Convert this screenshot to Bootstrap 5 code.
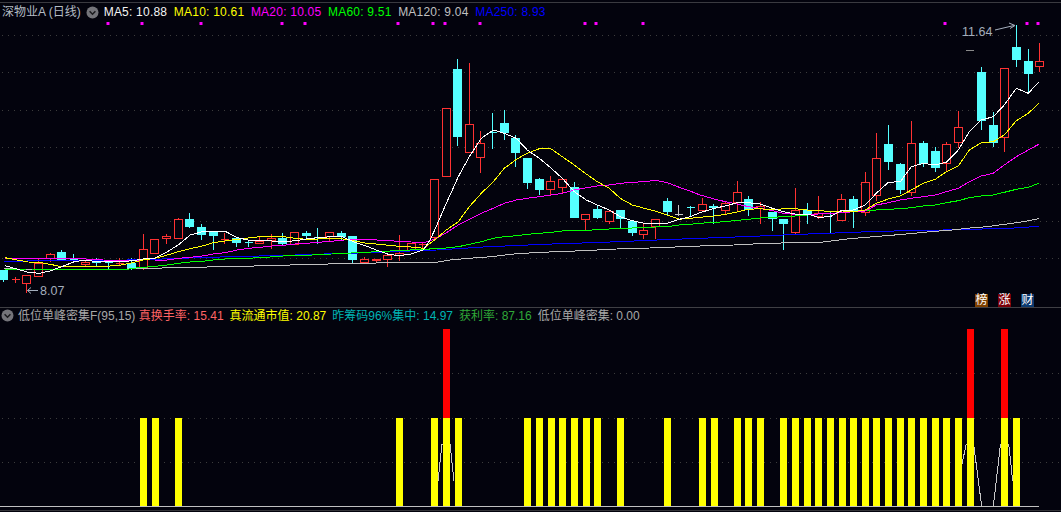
<!DOCTYPE html>
<html lang="zh">
<head>
<meta charset="utf-8">
<title>深物业A 日线</title>
<link href="https://cdn.jsdelivr.net/npm/bootstrap@5.3.0/dist/css/bootstrap.min.css" rel="stylesheet">
<style>
html,body{height:100%;margin:0;overflow:hidden;background:#03030d;}
body{font-family:"Liberation Sans","Noto Sans CJK SC",sans-serif;font-size:12px;line-height:16px;color:#b4bcc4;}
.term{width:1061px;height:512px;}
.pane-main{height:305px;border-top:1px solid #3a3a40;margin-top:2px;}
.pane-sub{height:205px;border-top:1px solid #3f3f44;}
.legend{height:19px;padding-left:2px;padding-bottom:1px;white-space:nowrap;flex:none;}
.legend-sub{height:19px;padding-left:1px;padding-bottom:4px;}
.legend span{display:block;}
.legend .itm{margin-right:6.6px;letter-spacing:.22px;}
.legend-sub .itm{margin-right:6px;letter-spacing:0;}
.legend-sub .itm-first{margin-right:3.5px;}
.chev{width:13px;height:13px;flex:none;}
.chev-main{margin-left:5px;margin-right:5px;}
.chart{display:block;width:1061px;flex:1 1 auto;min-height:0;}
.c-name{color:#b4bcc4;}.c-white{color:#f4f4f4;}.c-yel{color:#ffff00;}.c-mag{color:#ff00ff;}.c-grn{color:#00ff00;}.c-gry{color:#c0c0c0;}.c-blu{color:#0000ff;}
.c-sal{color:#ff6464;}.c-tea{color:#00b4b4;}.c-lgn{color:#30a838;}.c-sub{color:#a8a8a8;}
.tags{right:27px;bottom:0;gap:10px;}
.tagbox{width:13px;height:13px;font-size:12px;line-height:13px;text-align:center;color:#fff;}
.tag-a{background:#7d3f00;}.tag-b{background:#7a0008;}.tag-c{background:#0c3a70;}
.chart text{font-family:"Liberation Sans",sans-serif;font-size:12.5px;fill:#a4aebc;}
</style>
</head>
<body>
<main class="term d-flex flex-column">
  <section class="pane-main position-relative d-flex flex-column">
    <div class="legend d-flex align-items-center">
      <span class="c-name">深物业A (日线)</span>
      <svg class="chev chev-main" viewBox="0 0 13 13"><circle cx="6.5" cy="6.5" r="6" fill="#74747a"/><path d="M3.6 5.2 6.5 8.2 9.4 5.2" fill="none" stroke="#1a1a1e" stroke-width="1.5"/></svg>
      <span class="itm c-white">MA5: 10.88</span>
      <span class="itm c-yel">MA10: 10.61</span>
      <span class="itm c-mag">MA20: 10.05</span>
      <span class="itm c-grn">MA60: 9.51</span>
      <span class="itm c-gry">MA120: 9.04</span>
      <span class="itm c-blu">MA250: 8.93</span>
    </div>
    <svg id="mainChart" class="chart" viewBox="0 22 1061 285" preserveAspectRatio="none"></svg>
    <div class="tags position-absolute d-flex">
      <span class="tagbox tag-a">榜</span>
      <span class="tagbox tag-b">涨</span>
      <span class="tagbox tag-c">财</span>
    </div>
  </section>
  <section class="pane-sub d-flex flex-column">
    <div class="legend legend-sub d-flex align-items-center">
      <svg class="chev me-1" viewBox="0 0 13 13"><circle cx="6.5" cy="6.5" r="6" fill="#74747a"/><path d="M3.6 5.2 6.5 8.2 9.4 5.2" fill="none" stroke="#1a1a1e" stroke-width="1.5"/></svg>
      <span class="itm itm-first c-sub">低位单峰密集F(95,15)</span>
      <span class="itm c-sal">真换手率: 15.41</span>
      <span class="itm c-yel">真流通市值: 20.87</span>
      <span class="itm c-tea">昨筹码96%集中: 14.97</span>
      <span class="itm c-lgn">获利率: 87.16</span>
      <span class="itm c-sub">低位单峰密集: 0.00</span>
    </div>
    <svg id="subChart" class="chart" viewBox="0 327 1061 185" preserveAspectRatio="none"></svg>
  </section>
</main>
<script src="https://cdn.jsdelivr.net/npm/bootstrap@5.3.0/dist/js/bootstrap.bundle.min.js"></script>
<script>
var NS='http://www.w3.org/2000/svg';
function el(p,n,a,t){var e=document.createElementNS(NS,n);for(var k in a)e.setAttribute(k,a[k]);if(t)e.textContent=t;p.appendChild(e);return e;}
var M=document.getElementById('mainChart'),S=document.getElementById('subChart');
var DOT={stroke:'#3c3c3c','stroke-width':1,'stroke-dasharray':'1 5'};
[35.5,72.5,110.5,147.5,184.5,221.5,258.5].forEach(function(y){el(M,'line',Object.assign({x1:2,x2:1061,y1:y,y2:y},DOT));});
[373.5,418.5,462.5].forEach(function(y){el(S,'line',Object.assign({x1:2,x2:1061,y1:y,y2:y},DOT));});

/* zoomed readings: [offsetX, offsetY, x,y,x,y...] in 3x crop units */
function pts(o){var r=[];for(var s=0;s<o.length;s++){var g=o[s];for(var i=2;i<g.length;i+=2)r.push((g[0]+g[i]/3).toFixed(1)+','+(g[1]+g[i+1]/3).toFixed(1));}return r.join(' ');}
var L={
 blue:[[0,170,12,274,240,271,380,270,520,266,590,263,730,259,830,257,940,253,1050,250],[350,100,260,450,400,441,580,433,760,427,900,421,1050,415],[700,130,130,320,300,313,540,304,730,300,930,295,1016,289]],
 gray:[[0,170,12,296,80,298,380,297,520,293,620,292,625,289,762,288,905,284,970,284,1000,280,1050,280],[350,100,260,487,300,480,355,475,425,470,480,463,550,458,620,455,700,452,800,447,900,444,1000,440,1050,438],[700,130,60,347,160,342,270,338,370,336,440,327,520,320,610,313,690,305,756,300,800,295,860,290,920,282,970,275,1016,266]],
 green:[[0,170,15,298,80,297,380,298,415,293,466,289,502,285,535,280,571,276,607,274,640,270,676,267,712,265,760,264,800,262,850,258,936,255],[350,100,280,445,325,440,358,433,394,425,430,415,463,410,499,407,532,403,568,400,604,397,637,393,709,391,778,387,847,384,916,381,952,380,988,375,1020,373,1050,370],[700,130,43,277,76,275,112,271,145,268,181,264,217,262,250,260,286,258,322,255,355,252,427,248,496,242,529,240,565,238,601,236,634,233,670,228,706,225,739,218,775,212,808,203,844,198,880,195,913,187,949,178,985,172,1016,160]],
 mag:[[0,170,15,265,50,265,85,266,118,266,150,265,185,265,240,266,310,270,362,272,430,273,466,273,502,270,535,265,571,262,607,258,640,252,676,248,712,240,745,235,781,232,815,228,850,226,886,222,919,220,955,217,991,214,1024,211],[350,100,0,418,46,418,115,422,184,426,220,428,254,418,289,398,325,375,358,358,394,340,430,325,463,310,499,300,532,295,568,290,604,285,637,280,673,270,709,263,742,258,778,255,811,250,847,247,883,245,916,241,952,248,988,262,1020,273,1050,285],[700,130,0,195,43,207,76,215,112,222,145,230,181,235,217,242,250,250,286,253,322,253,355,252,391,250,427,248,460,245,496,243,529,225,565,218,601,210,634,205,670,200,706,195,739,185,775,175,808,155,844,138,880,130,913,105,949,80,985,60,1016,43]],
 yel:[[0,170,15,263,50,270,85,276,118,277,150,283,185,290,223,290,256,290,290,290,330,288,362,285,397,278,430,270,466,265,502,255,535,245,571,236,607,228,640,218,676,213,712,208,745,204,781,200,815,200,850,200,886,205,919,208,955,207,991,206,1024,206],[350,100,10,422,46,429,79,432,115,436,148,439,184,441,220,445,254,420,289,390,325,365,358,320,394,280,430,245,463,205,499,178,532,160,568,146,604,147,637,170,673,195,709,222,742,245,778,265,811,295,847,315,883,325,916,333,952,345,988,358,1020,355,1050,352],[700,130,43,258,76,253,112,246,145,238,181,236,217,240,250,236,286,236,322,240,355,242,391,244,427,243,460,245,496,240,529,220,565,207,601,198,634,180,670,160,706,148,739,125,775,108,808,60,844,38,880,35],[700,0,913,405,949,362,985,340,1016,310]],
 white:[[0,170,15,287,50,297,85,307,118,310,150,303,185,290,223,275,256,270,290,275,330,275,362,275,397,272,430,267,466,264,502,245,535,225,571,195,607,185,640,184,676,184,712,203,745,210,781,212,815,213,850,215,886,212,919,207,955,203,991,200,1024,199],[350,100,10,425,46,437,79,450,115,463,148,467,184,462,220,450,240,420,254,390,289,310,325,230,358,170,394,115,430,90,463,100,499,115,532,150,568,175,604,205,637,235,673,275,709,300,742,315,778,330,811,350,847,362,883,370,916,372,952,370,988,358,1020,350,1050,338],[700,130,43,235,76,228,112,218,145,218,181,222,217,235,250,245,286,252,322,252,355,262,391,260,427,240,460,240,496,225,529,190,565,157,601,155,634,110,670,100,706,105,739,97,775,60],[700,0,808,395,844,360,880,350,913,315,949,265,985,280,1016,246]]
};
/* candles: index, type(c/r/w), wickTop, bodyTop, bodyBottom, wickBottom */
var C=[[0,'c',270,270,280,282],[1,'r',277,279,280,283],[2,'r',275,275,284,293],[3,'r',259,263,277,277],[4,'r',253,254,259,262],[5,'c',250,252,261,261],[6,'c',254,259,260,262],[7,'r',260,262,265,266],[8,'c',258,261,263,267],[9,'c',260,262,263,269],[10,'r',258,263,264,265],[11,'c',258,263,268,270],[12,'r',234,249,268,270],[13,'r',239,239,254,254],[14,'r',234,236,239,244],[15,'r',218,219,239,239],[16,'c',213,219,227,228],[17,'c',224,227,235,240],[18,'c',231,231,236,250],[19,'r',233,239,240,244],[20,'c',237,238,243,247],[21,'c',241,242,243,247],[22,'r',236,241,244,244],[23,'r',234,238,241,249],[24,'c',233,238,244,246],[25,'r',232,232,245,245],[26,'c',231,233,236,239],[27,'c',228,237,238,244],[28,'r',232,232,237,241],[29,'c',231,233,237,240],[30,'c',236,236,260,263],[31,'r',257,259,263,263],[32,'r',259,259,261,263],[33,'r',255,255,260,267],[34,'r',235,253,256,261],[35,'r',243,243,251,251],[36,'r',242,244,245,248],[37,'r',179,179,238,240],[38,'r',108,108,177,177],[39,'c',59,69,137,146],[40,'r',63,124,153,153],[41,'r',131,143,158,173],[42,'c',113,132,133,149],[43,'c',110,123,133,140],[44,'c',135,138,153,167],[45,'c',158,158,183,189],[46,'c',178,179,190,195],[47,'r',176,181,190,195],[48,'r',179,179,188,193],[49,'c',182,187,218,218],[50,'r',214,214,220,230],[51,'c',205,209,218,219],[52,'r',211,211,222,224],[53,'c',210,210,219,228],[54,'c',220,221,233,236],[55,'r',223,230,235,239],[56,'r',219,219,227,239],[57,'c',198,201,212,216],[58,'w',205,214,215,216],[59,'c',206,207,208,217],[60,'r',198,204,211,211],[61,'c',204,206,208,224],[62,'r',201,203,211,215],[63,'r',181,192,203,212],[64,'c',196,199,210,216],[65,'r',202,206,209,224],[66,'c',212,212,219,231],[67,'c',219,219,224,250],[68,'r',188,210,233,234],[69,'c',203,210,214,224],[70,'r',196,213,217,219],[71,'c',211,211,212,233],[72,'r',194,199,221,221],[73,'c',196,199,212,228],[74,'r',172,182,213,216],[75,'r',133,158,196,201],[76,'c',125,144,162,170],[77,'c',163,164,190,194],[78,'r',121,143,193,196],[79,'c',141,143,164,167],[80,'c',147,151,168,172],[81,'r',142,144,164,172],[82,'r',111,127,143,148],[84,'c',67,72,121,130],[85,'c',112,125,143,147],[86,'r',68,68,138,152],[87,'c',25,47,60,67],[88,'c',49,61,74,93],[89,'r',43,61,67,72]];
var cc={c:'#55ffff',r:'#ff3232',w:'#c8c8c8'};
C.forEach(function(k){
 var x=Math.round(3+k[0]*11.645)+.5,col=cc[k[1]],g=el(M,'g',{stroke:col,fill:'none','stroke-width':1,'shape-rendering':'crispEdges'});
 el(g,'line',{x1:x,x2:x,y1:k[2],y2:k[3]});el(g,'line',{x1:x,x2:x,y1:k[4],y2:k[5]});
 if(k[4]-k[3]<=1){el(g,'line',{x1:x-4,x2:x+4,y1:k[3]+.5,y2:k[3]+.5,'stroke-width':1});el(g,'line',{x1:x,x2:x,y1:k[3],y2:k[4]});}
 else if(k[1]=='c'){el(g,'rect',{x:x-4.5,y:k[3],width:9,height:k[4]-k[3],fill:col,stroke:'none'});}
 else{el(g,'rect',{x:x-4,y:k[3]+.5,width:8,height:k[4]-k[3]-1,'stroke-width':1,fill:'#03030d'});}
});
[['blue','#0000ff'],['gray','#c0c0c0'],['green','#00ff00'],['mag','#ff00ff'],['yel','#ffff00'],['white','#ffffff']].forEach(function(a){
 el(M,'polyline',{points:pts(L[a[0]]),fill:'none',stroke:a[1],'stroke-width':1,'shape-rendering':'crispEdges'});
});
[108,142,201,282,305,398,433,445,480,585,596,643,945,1027,1038].forEach(function(x){el(M,'rect',{x:x-1.5,y:22,width:3,height:3,fill:'#ff00ff'});});
el(M,'text',{x:962,y:36},'11.64');
el(M,'path',{d:'M995 30 L1014 25.5 M1009 23 L1015 25.5 L1010 28.5',fill:'none',stroke:'#a4aebc','stroke-width':1});
el(M,'line',{x1:966,x2:974,y1:50.5,y2:50.5,stroke:'#8a8a8a'});
el(M,'text',{x:40,y:295},'8.07');
el(M,'path',{d:'M38 290.5 H27.5 M31 287.5 L27.5 290.5 L31 293.5',fill:'none',stroke:'#a4aebc','stroke-width':1});
el(M,'path',{d:'M1053.5 8 L1059 13.5 L1053.5 19 L1048 13.5 Z',fill:'none',stroke:'#5a5a5e','stroke-width':1});

/* lower pane */
el(S,'polyline',{points:'438,481 442,444 450,444 454,481',fill:'none',stroke:'#c8c8c8','stroke-width':1,'shape-rendering':'crispEdges'});
el(S,'polyline',{points:'958.3,481 966.3,444 974,447 981.7,506.5 993.3,506.5 1000.3,446 1001,444 1008.7,444 1012.7,481',fill:'none',stroke:'#c8c8c8','stroke-width':1,'shape-rendering':'crispEdges'});
el(S,'line',{x1:0,x2:1039,y1:506.5,y2:506.5,stroke:'#c0c0c0','stroke-width':1});
el(S,'line',{x1:0,x2:1061,y1:510.5,y2:510.5,stroke:'#333338','stroke-width':1});
[140,152,175,396,431,443,455,524,536,548,559,571,583,594,617,664,699,711,734,745,757,780,792,804,815,827,839,850,862,873,885,897,908,920,932,943,955,967,1001,1013].forEach(function(x){el(S,'rect',{x:x,y:418,width:7,height:88,fill:'#ffff00'});});
[443,967,1001].forEach(function(x){el(S,'rect',{x:x,y:329,width:7,height:89,fill:'#ff0000'});});
</script>
</body>
</html>
